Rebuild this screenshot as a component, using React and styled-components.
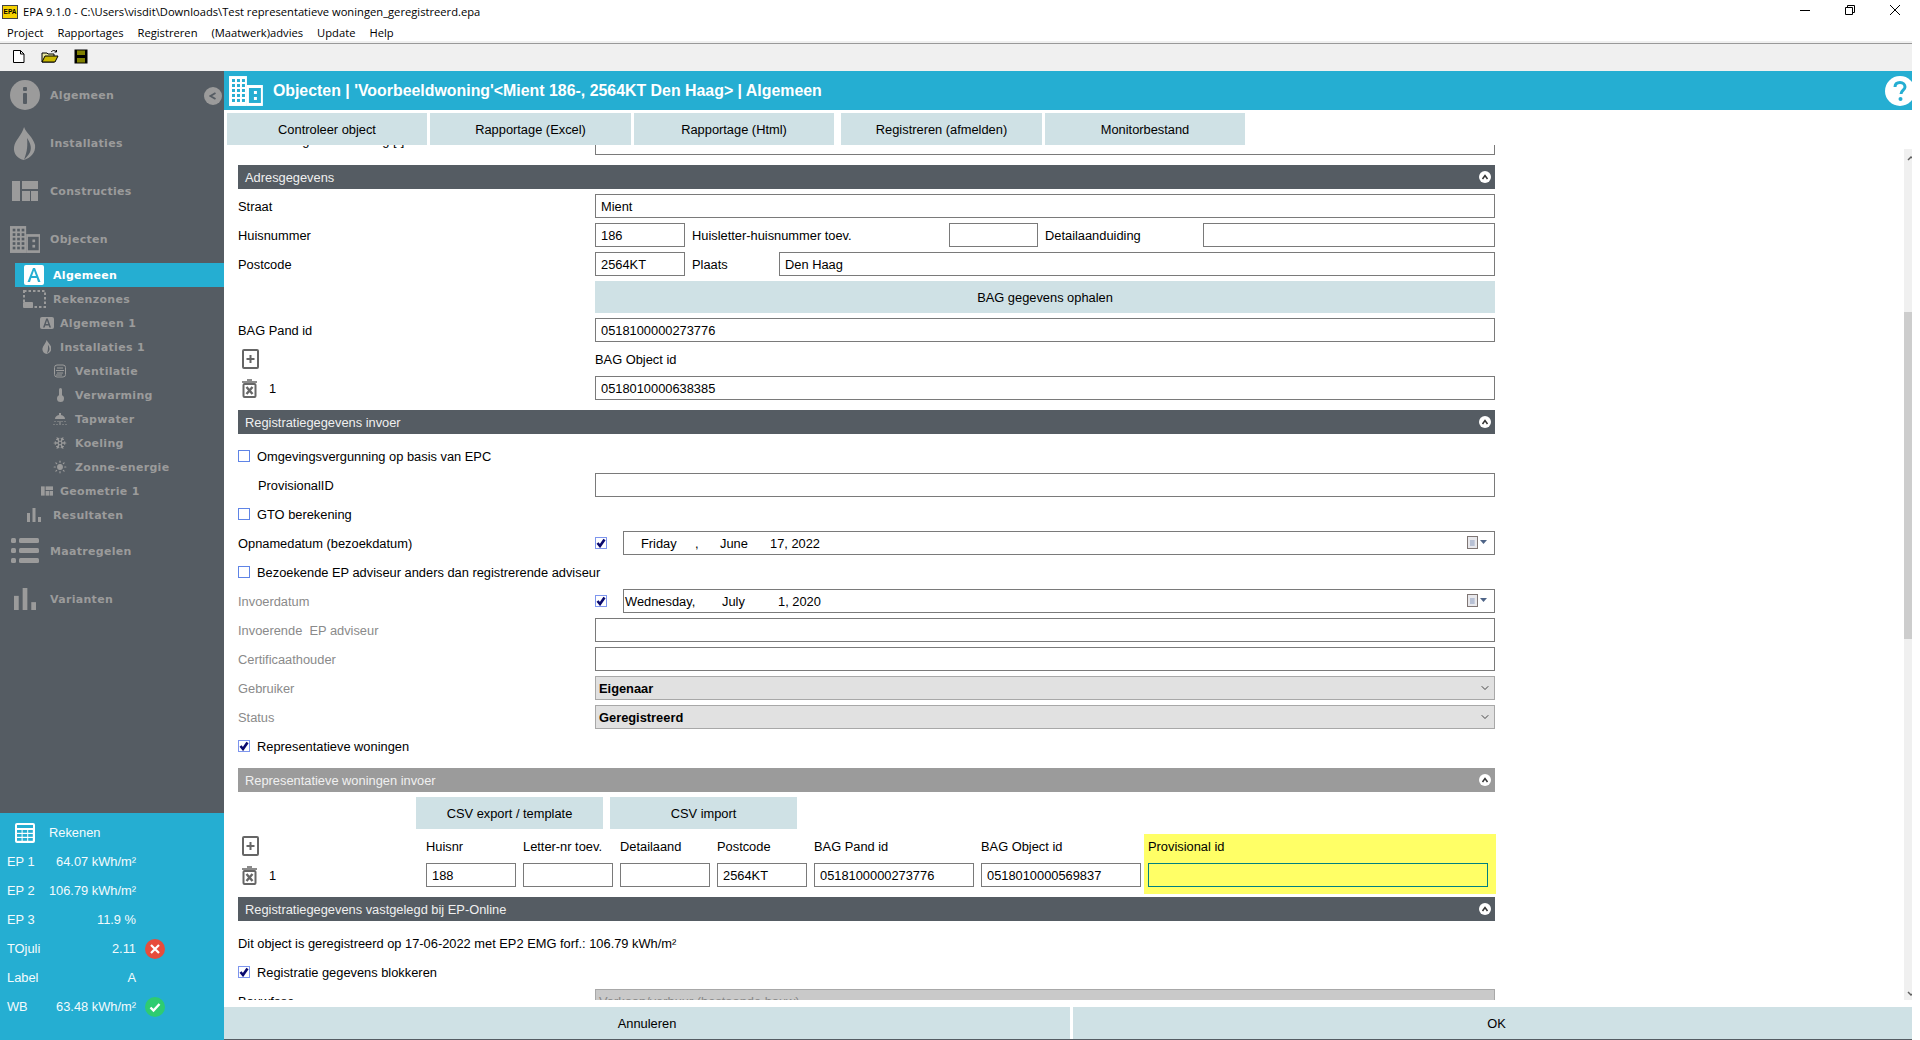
import React from 'react';
import styled, { createGlobalStyle } from 'styled-components';
import { Snowflake, Sun, ChevronDown } from 'lucide-react';

const GlobalStyle = createGlobalStyle`
    html, body {
        margin: 0;
        padding: 0;
        background: #fff;
    }
    body {
        font-family: "Liberation Sans", Arial, sans-serif;
        font-size: 12.85px;
        color: #000;
    }
    * {
        box-sizing: border-box;
    }
`;

const Window = styled.div`
    width: 1920px;
    height: 1040px;
    padding-right: 8px;
    display: flex;
    flex-direction: column;
    overflow: hidden;
    background: #fff;
`;

const TitleBar = styled.div`
    height: 23px;
    display: flex;
    align-items: center;
    padding-left: 2px;
    font-family: "Open Sans", sans-serif;
    font-size: 11.2px;
`;

const AppIcon = styled.span`
    width: 16px;
    height: 14px;
    margin-right: 5px;
    background: #f6d200;
    border: 1px solid #444;
    font-family: "Liberation Sans", sans-serif;
    font-weight: bold;
    font-size: 6.5px;
    line-height: 12px;
    text-align: center;
`;

const WindowButtons = styled.div`
    margin-left: auto;
    display: flex;
    gap: 35px;
    padding: 0 12px 3px 0;
    align-items: center;
`;

const MenuBar = styled.div`
    height: 18px;
    display: flex;
    gap: 14px;
    padding-left: 7px;
    align-items: center;
    font-family: "Open Sans", sans-serif;
    font-size: 11.2px;
`;

const MenuRule = styled.div`
    height: 3px;
    background: #f0f0f0;
    border-bottom: 1px solid #999;
`;

const ToolBar = styled.div`
    height: 27px;
    display: flex;
    align-items: center;
    gap: 14px;
    padding: 0 0 3px 11px;
    background: #f0f0f0;
`;

const Body = styled.div`
    flex: 1;
    display: flex;
    min-height: 0;
`;

const SideBar = styled.aside`
    width: 224px;
    display: flex;
    flex-direction: column;
    flex-shrink: 0;
`;

const Nav = styled.nav`
    flex: 1;
    background: #555c63;
    color: #9b9b9b;
    font-family: "DejaVu Sans", sans-serif;
    font-weight: bold;
    font-size: 11px;
    letter-spacing: 0.3px;
`;

const NavItem = styled.div`
    display: flex;
    align-items: center;
    height: ${(p) => (p.$main ? 48 : 24)}px;
    padding-left: ${(p) => p.$indent || 0}px;
    margin-left: ${(p) => (p.$active ? 15 : 0)}px;
    background: ${(p) => (p.$active ? '#25aed2' : 'transparent')};
    color: ${(p) => (p.$active ? '#fff' : 'inherit')};
`;

const NavIcon = styled.span`
    width: ${(p) => p.$width}px;
    flex-shrink: 0;
    display: flex;
    justify-content: ${(p) => (p.$left ? 'flex-start' : 'center')};
    align-items: center;
`;

const CollapseButton = styled.span`
    width: 18px;
    height: 18px;
    margin: 2px 2px 0 auto;
    border-radius: 50%;
    background: #9b9b9b;
    display: flex;
    align-items: center;
    justify-content: center;
`;

const ResultPanel = styled.div`
    height: 227px;
    padding: 5px 0 0 7px;
    background: #25aed2;
    color: #f4fbfd;
`;

const ResultHead = styled.div`
    height: 29px;
    display: flex;
    align-items: center;
    gap: 14px;
    padding-left: 8px;
`;

const ResultRow = styled.div`
    height: 29px;
    display: grid;
    grid-template-columns: 40px 89px 29px;
    align-items: center;
`;

const ResultValue = styled.span`
    text-align: right;
    white-space: nowrap;
`;

const StatusDot = styled.span`
    justify-self: end;
    width: 20px;
    height: 20px;
    border-radius: 50%;
    background: ${(p) => p.$color};
    display: flex;
    align-items: center;
    justify-content: center;
`;

const Main = styled.main`
    flex: 1;
    min-width: 0;
    display: flex;
    flex-direction: column;
`;

const Header = styled.header`
    height: 39px;
    display: flex;
    align-items: center;
    padding-left: 5px;
    gap: 10px;
    background: #25aed2;
    color: #fff;
    font-weight: bold;
    font-size: 15.9px;
    overflow: hidden;
`;

const HelpIcon = styled.span`
    margin-left: auto;
    margin-right: -3px;
    display: flex;
`;

const ActionBar = styled.div`
    height: 35px;
    padding: 3px 0 0 3px;
    display: flex;
    position: relative;
    z-index: 1;
    background: #fff;
`;

const FlatButton = styled.button`
    border: 0;
    padding: 0 0 0 ${(p) => p.$pad || 0}px;
    height: 32px;
    width: ${(p) => p.$width || 'auto'};
    flex: ${(p) => p.$grow || 'none'};
    margin-right: ${(p) => p.$gap || 0}px;
    background: #cfe1e5;
    color: #000;
    font: inherit;
    font-size: 12.85px;
`;

const Viewport = styled.div`
    flex: 1;
    min-height: 0;
    display: flex;
    overflow: hidden;
`;

const Form = styled.div`
    width: 1271px;
    margin-top: -14px;
    padding-left: 14px;
    display: flex;
    flex-direction: column;
    gap: 5px;
`;

const SectionHeader = styled.div`
    height: 24px;
    margin-top: 5px;
    margin-bottom: ${(p) => (p.$loose ? 5 : 0)}px;
    padding: 0 4px 0 7px;
    flex-shrink: 0;
    display: flex;
    align-items: center;
    justify-content: space-between;
    background: ${(p) => (p.$muted ? '#9b9b9b' : '#555c63')};
    color: #f0f0f0;
`;

const Row = styled.div`
    height: ${(p) => p.$height || 24}px;
    flex-shrink: 0;
    display: grid;
    grid-template-columns: 357px 1fr;
    align-items: center;
`;

const Line = styled.div`
    height: 24px;
    flex-shrink: 0;
    display: flex;
    align-items: center;
`;

const Label = styled.span`
    white-space: nowrap;
    color: ${(p) => (p.$dim ? '#8a8a8a' : '#000')};
    padding-left: ${(p) => p.$indent || 0}px;
`;

const ClippedLabel = styled(Label)`
    align-self: start;
    padding-top: 3px;
    line-height: 14px;
`;

const FieldGroup = styled.div`
    display: flex;
    align-items: center;
`;

const Input = styled.input`
    height: 24px;
    width: ${(p) => p.$width || '100%'};
    flex: ${(p) => (p.$grow ? 1 : 'none')};
    min-width: 0;
    padding: 0 5px;
    border: 1px solid ${(p) => (p.$focus ? '#00807f' : '#7a7a7a')};
    border-radius: 0;
    outline: 0;
    background: ${(p) => (p.$focus ? '#ffff66' : '#fff')};
    font: inherit;
    font-size: 12.85px;
    color: #000;
`;

const InlineLabel = styled.span`
    width: ${(p) => p.$width}px;
    padding-left: 7px;
    white-space: nowrap;
    flex-shrink: 0;
`;

const Select = styled.div`
    height: 24px;
    padding: 0 3px;
    display: flex;
    align-items: center;
    justify-content: space-between;
    border: 1px solid #a8a8a8;
    background: ${(p) => (p.$disabled ? '#c9c9c9' : '#e1e1e1')};
    color: ${(p) => (p.$disabled ? '#888' : '#000')};
    font-weight: ${(p) => (p.$disabled ? 'normal' : 'bold')};
`;

const DateField = styled.div`
    flex: 1;
    height: 24px;
    margin-left: 16px;
    padding-left: ${(p) => p.$pad}px;
    padding-right: 6px;
    display: flex;
    align-items: center;
    border: 1px solid #7a7a7a;
`;

const DatePart = styled.span`
    width: ${(p) => p.$width}px;
    flex-shrink: 0;
    white-space: nowrap;
`;

const CalendarIcon = styled.span`
    margin-left: auto;
    display: flex;
`;

const Box = styled.span`
    width: 12px;
    height: 12px;
    flex-shrink: 0;
    display: flex;
    align-items: center;
    justify-content: center;
    background: #fff;
    border: 1px solid ${(p) => (p.$checked ? '#7d95ee' : '#5f84e6')};
`;

const CheckLine = styled(Line)`
    gap: 7px;
`;

const IconLine = styled(Line)`
    padding-left: 4px;
    gap: 12px;
`;

const ButtonLine = styled.div`
    height: 32px;
    flex-shrink: 0;
    padding-left: 178px;
    display: flex;
    gap: 7px;
`;

const RepGrid = styled.div`
    margin-right: 7px;
    flex-shrink: 0;
    display: grid;
    grid-template-columns: 181px 90px 90px 90px 90px 160px 160px 1fr;
    column-gap: 7px;
`;

const RepColumn = styled.div`
    display: flex;
    flex-direction: column;
    gap: 5px;
`;

const YellowColumn = styled(RepColumn)`
    margin: 0 -8px -7px -4px;
    padding: 0 8px 7px 4px;
    background: #ffff66;
`;

const CollapseDot = styled.span`
    width: 12px;
    height: 12px;
    border-radius: 50%;
    background: #fff;
    display: flex;
    align-items: center;
    justify-content: center;
`;

const ScrollTrack = styled.div`
    width: 8px;
    margin: 4px 0 0 auto;
    padding-top: 6px;
    background: #f0f0f0;
    display: flex;
    flex-direction: column;
`;

const ScrollThumb = styled.div`
    width: 8px;
    height: 327px;
    margin-top: 151px;
    background: #cdcdcd;
`;

const ScrollArrow = styled.span`
    display: flex;
    margin-top: ${(p) => (p.$down ? 'auto' : 0)};
    padding-bottom: ${(p) => (p.$down ? '3px' : 0)};
`;

const Footer = styled.div`
    height: 33px;
    margin-top: 7px;
    display: flex;
    gap: 3px;
    border-bottom: 1px solid #555c63;
`;

// drawings ------------------------------------------------------------------

const Building = ({ size = 27, color = '#9b9b9b', hole = '#555c63' }) => (
    <svg width={size * 1.13} height={size} viewBox="0 0 34 30">
        <rect x="0" y="0" width="18" height="30" fill={color} />
        <rect x="18" y="9" width="16" height="21" fill={color} />
        {[3, 8, 13].map((x) =>
            [3, 8, 13, 18, 23].map((y) => <rect key={`${x}-${y}`} x={x} y={y} width="3" height="3" fill={hole} />),
        )}
        <rect x="20" y="12" width="12" height="15" fill={hole} />
        <rect x="25" y="15" width="3" height="3" fill={color} />
        <rect x="25" y="21" width="3" height="3" fill={color} />
    </svg>
);

const Info = () => (
    <svg width="30" height="30" viewBox="0 0 30 30">
        <circle cx="15" cy="15" r="15" fill="#9b9b9b" />
        <rect x="13" y="7" width="4" height="4" rx="1" fill="#555c63" />
        <rect x="13" y="13" width="4" height="11" rx="1" fill="#555c63" />
    </svg>
);

const Flame = ({ size = 33, color = '#9b9b9b' }) => (
    <svg width={size * 0.7} height={size} viewBox="0 0 23 33">
        <path d="M11 0C13 6 20 10 22 18C23 26 17 31 11 33C5 32 0 27 1 20C2 13 9 8 11 0Z" fill={color} />
        <path d="M14 11C17 16 19 20 17 25C16 28 13 30 11 33C13 27 15 22 14 11Z" fill="#555c63" />
    </svg>
);

const Blocks = ({ width = 26, height = 20 }) => (
    <svg width={width} height={height} viewBox="0 0 26 20">
        <rect x="0" y="0" width="8" height="20" fill="#9b9b9b" />
        <rect x="10" y="0" width="16" height="8" fill="#9b9b9b" />
        <rect x="10" y="10" width="8" height="10" fill="#9b9b9b" />
        <rect x="19" y="10" width="7" height="10" fill="#9b9b9b" />
    </svg>
);

const Bars = ({ width = 14, height = 14 }) => (
    <svg width={width} height={height} viewBox="0 0 14 14">
        <rect x="0" y="5" width="3" height="9" fill="#9b9b9b" />
        <rect x="5.5" y="0" width="3" height="14" fill="#9b9b9b" />
        <rect x="11" y="9" width="3" height="5" fill="#9b9b9b" />
    </svg>
);

const ListIcon = () => (
    <svg width="28" height="26" viewBox="0 0 28 26">
        {[0, 10, 20].map((y) => (
            <g key={y} fill="#9b9b9b">
                <rect x="0" y={y} width="5" height="5" rx="1.5" />
                <rect x="8" y={y} width="20" height="5" rx="1.5" />
            </g>
        ))}
    </svg>
);

const ActiveA = () => (
    <svg width="20" height="20" viewBox="0 0 20 20">
        <rect width="20" height="20" rx="2" fill="#fff" />
        <path d="M3.5 17L9 3H11L16.5 17H14L12.7 13H7.3L6 17ZM8 11H12L10 5.5Z" fill="#25aed2" />
    </svg>
);

const SmallA = () => (
    <svg width="14" height="12" viewBox="0 0 14 12">
        <rect width="14" height="12" rx="2" fill="#9b9b9b" />
        <path d="M3 10.5L6.2 1.5H7.8L11 10.5H9.4L8.7 8.5H5.3L4.6 10.5ZM5.8 7H8.2L7 3.6Z" fill="#555c63" />
    </svg>
);

const Zones = () => (
    <svg width="23" height="19" viewBox="0 0 23 19">
        <rect x="1" y="1" width="21" height="16" fill="none" stroke="#9b9b9b" strokeWidth="2" strokeDasharray="2.5 2" />
        <rect x="0" y="12" width="10" height="6" rx="1" fill="#9b9b9b" />
    </svg>
);

const Vent = () => (
    <svg width="14" height="14" viewBox="0 0 14 14">
        <rect x="1.5" y="1" width="11" height="12" rx="2.5" fill="none" stroke="#9b9b9b" />
        <path d="M4 4H10M3 6.5H11M4 9H10M3 11H9" stroke="#9b9b9b" />
    </svg>
);

const Thermo = () => (
    <svg width="9" height="14" viewBox="0 0 9 14">
        <rect x="3" y="0" width="3" height="9" rx="1.5" fill="#9b9b9b" />
        <circle cx="4.5" cy="10.5" r="3.5" fill="#9b9b9b" />
    </svg>
);

const Shower = () => (
    <svg width="14" height="13" viewBox="0 0 14 13">
        <path d="M6 0H8V2C10.5 2.5 12 4 12 6H2C2 4 3.5 2.5 6 2Z" fill="#9b9b9b" />
        <path d="M2 8V9M5 8V9M9 8V9M12 8V9M1 11V12M4 11V12M7 8V12M10 11V12M13 11V12" stroke="#9b9b9b" />
    </svg>
);

const Calculator = () => (
    <svg width="20" height="20" viewBox="0 0 20 20">
        <rect width="20" height="20" rx="2" fill="#fff" />
        <rect x="2" y="2" width="16" height="3" fill="#25aed2" />
        {[2, 7.6, 13.2].map((x) =>
            [7, 11, 15].map((y) => <rect key={`${x}-${y}`} x={x} y={y} width="4.6" height="2.8" fill="#25aed2" />),
        )}
    </svg>
);

const PlusBox = () => (
    <svg width="17" height="20" viewBox="0 0 17 20">
        <rect x="1" y="1" width="15" height="18" rx="1" fill="#fff" stroke="#666" strokeWidth="2" />
        <path d="M4.5 10H12.5M8.5 6V14" stroke="#666" strokeWidth="2" />
    </svg>
);

const Trash = () => (
    <svg width="15" height="19" viewBox="0 0 15 19">
        <path d="M0 3H15M5 1H10" stroke="#666" strokeWidth="1.6" />
        <rect x="1.5" y="5" width="12" height="13" rx="1" fill="#fff" stroke="#666" strokeWidth="2" />
        <path d="M4.5 8L10.5 15M10.5 8L4.5 15" stroke="#666" strokeWidth="2.4" />
    </svg>
);

const Tick = () => (
    <svg width="10" height="10" viewBox="0 0 10 10">
        <path d="M1.5 5L4 8L8.5 1.5" fill="none" stroke="#0a0a6e" strokeWidth="2.6" />
    </svg>
);

const Calendar = () => (
    <svg width="21" height="14" viewBox="0 0 21 14">
        <rect x="0.5" y="0.5" width="10" height="12" fill="#e8e8ec" stroke="#7f7674" />
        <path d="M3 5H8M3 7H8M3 9H8M4 4V10M6 4V10" stroke="#a7b3cc" />
        <path d="M13 4H20L16.5 8Z" fill="#4e6487" />
    </svg>
);

const Check = ({ checked }) => <Box $checked={checked}>{checked && <Tick />}</Box>;

const Chevron = () => (
    <CollapseDot>
        <svg width="8" height="8" viewBox="0 0 8 8">
            <path d="M1.5 6L4 2.5L6.5 6" fill="none" stroke="#333" strokeWidth="1.5" />
        </svg>
    </CollapseDot>
);

const Section = ({ title, muted, loose }) => (
    <SectionHeader $muted={muted} $loose={loose}>
        {title}
        <Chevron />
    </SectionHeader>
);

const navItems = [
    { label: 'Rekenzones', indent: 23, width: 30, left: true, icon: <Zones /> },
    { label: 'Algemeen 1', indent: 33, width: 27, icon: <SmallA /> },
    { label: 'Installaties 1', indent: 33, width: 27, icon: <Flame size={14} /> },
    { label: 'Ventilatie', indent: 45, width: 30, icon: <Vent /> },
    { label: 'Verwarming', indent: 45, width: 30, icon: <Thermo /> },
    { label: 'Tapwater', indent: 45, width: 30, icon: <Shower /> },
    { label: 'Koeling', indent: 45, width: 30, icon: <Snowflake size={14} color="#9b9b9b" /> },
    { label: 'Zonne-energie', indent: 45, width: 30, icon: <Sun size={14} color="#9b9b9b" fill="#9b9b9b" /> },
    { label: 'Geometrie 1', indent: 33, width: 27, icon: <Blocks width={12} height={10} /> },
    { label: 'Resultaten', indent: 27, width: 26, left: true, icon: <Bars /> },
];

const results = [
    { label: 'EP 1', value: '64.07 kWh/m²' },
    { label: 'EP 2', value: '106.79 kWh/m²' },
    { label: 'EP 3', value: '11.9 %' },
    { label: 'TOjuli', value: '2.11', status: 'bad' },
    { label: 'Label', value: 'A' },
    { label: 'WB', value: '63.48 kWh/m²', status: 'good' },
];

const repColumns = [
    { label: 'Huisnr', value: '188' },
    { label: 'Letter-nr toev.', value: '' },
    { label: 'Detailaand', value: '' },
    { label: 'Postcode', value: '2564KT' },
    { label: 'BAG Pand id', value: '0518100000273776' },
    { label: 'BAG Object id', value: '0518010000569837' },
];

const ro = { readOnly: true };

const App = () => (
    <Window>
        <GlobalStyle />
        <TitleBar>
            <AppIcon>EPA</AppIcon>
            EPA 9.1.0 - C:\Users\visdit\Downloads\Test representatieve woningen_geregistreerd.epa
            <WindowButtons>
                <svg width="10" height="10" viewBox="0 0 10 10">
                    <path d="M0 5.5H10" stroke="#000" />
                </svg>
                <svg width="10" height="10" viewBox="0 0 10 10">
                    <path d="M0.5 2.5H7.5V9.5H0.5ZM2.5 2.5V0.5H9.5V7.5H7.5" fill="none" stroke="#000" />
                </svg>
                <svg width="10" height="10" viewBox="0 0 10 10">
                    <path d="M0 0L10 10M10 0L0 10" stroke="#000" />
                </svg>
            </WindowButtons>
        </TitleBar>
        <MenuBar>
            <span>Project</span>
            <span>Rapportages</span>
            <span>Registreren</span>
            <span>(Maatwerk)advies</span>
            <span>Update</span>
            <span>Help</span>
        </MenuBar>
        <MenuRule />
        <ToolBar>
            <svg width="16" height="15" viewBox="0 0 16 15">
                <path d="M2.5 1.5H9.5L13 5V13.5H2.5Z" fill="#fff" stroke="#000" />
                <path d="M9.5 1.5V5H13" fill="none" stroke="#000" />
            </svg>
            <svg width="18" height="15" viewBox="0 0 18 15">
                <path d="M1 13V4H6L7 5H13V13Z" fill="#e8e8a0" stroke="#000" />
                <path d="M1 13L4 7H17L14 13Z" fill="#c9b800" stroke="#000" />
                <path d="M10 3C12 1 14 1 15.5 3M15.5 3V1M15.5 3H13.5" fill="none" stroke="#000" />
            </svg>
            <svg width="16" height="15" viewBox="0 0 16 15">
                <rect x="1.5" y="0.5" width="13" height="14" fill="#000" />
                <rect x="4" y="1.5" width="8" height="4.5" fill="#808000" />
                <rect x="4" y="9" width="8" height="4.5" fill="#808000" />
            </svg>
        </ToolBar>
        <Body>
            <SideBar>
                <Nav>
                    <NavItem $main>
                        <NavIcon $width={50}>
                            <Info />
                        </NavIcon>
                        Algemeen
                        <CollapseButton>
                            <svg width="8" height="8" viewBox="0 0 8 8">
                                <path d="M6.5 1L1.5 4L6.5 7" fill="none" stroke="#555c63" strokeWidth="1.8" />
                            </svg>
                        </CollapseButton>
                    </NavItem>
                    <NavItem $main>
                        <NavIcon $width={50}>
                            <Flame />
                        </NavIcon>
                        Installaties
                    </NavItem>
                    <NavItem $main>
                        <NavIcon $width={50}>
                            <Blocks />
                        </NavIcon>
                        Constructies
                    </NavItem>
                    <NavItem $main>
                        <NavIcon $width={50}>
                            <Building />
                        </NavIcon>
                        Objecten
                    </NavItem>
                    <NavItem $active $indent={9}>
                        <NavIcon $width={29} $left>
                            <ActiveA />
                        </NavIcon>
                        Algemeen
                    </NavItem>
                    {navItems.map((item) => (
                        <NavItem key={item.label} $indent={item.indent}>
                            <NavIcon $width={item.width} $left={item.left}>
                                {item.icon}
                            </NavIcon>
                            {item.label}
                        </NavItem>
                    ))}
                    <NavItem $main>
                        <NavIcon $width={50}>
                            <ListIcon />
                        </NavIcon>
                        Maatregelen
                    </NavItem>
                    <NavItem $main>
                        <NavIcon $width={50}>
                            <Bars width={22} height={22} />
                        </NavIcon>
                        Varianten
                    </NavItem>
                </Nav>
                <ResultPanel>
                    <ResultHead>
                        <Calculator />
                        Rekenen
                    </ResultHead>
                    {results.map((r) => (
                        <ResultRow key={r.label}>
                            <span>{r.label}</span>
                            <ResultValue>{r.value}</ResultValue>
                            {r.status === 'bad' && (
                                <StatusDot $color="#e74c3c">
                                    <svg width="12" height="12" viewBox="0 0 12 12">
                                        <path d="M2 2L10 10M10 2L2 10" stroke="#fff" strokeWidth="2.2" />
                                    </svg>
                                </StatusDot>
                            )}
                            {r.status === 'good' && (
                                <StatusDot $color="#2ecc71">
                                    <svg width="12" height="12" viewBox="0 0 12 12">
                                        <path d="M1.5 6.5L4.5 9.5L10.5 3" fill="none" stroke="#fff" strokeWidth="2.4" />
                                    </svg>
                                </StatusDot>
                            )}
                        </ResultRow>
                    ))}
                </ResultPanel>
            </SideBar>
            <Main>
                <Header>
                    <Building size={30} color="#fff" hole="#25aed2" />
                    Objecten | 'Voorbeeldwoning'&lt;Mient 186-, 2564KT Den Haag&gt; | Algemeen
                    <HelpIcon>
                        <svg width="30" height="30" viewBox="0 0 30 30">
                            <circle cx="15" cy="15" r="15" fill="#fff" />
                            <path d="M10 11C10 8 12 6.5 15 6.5C18 6.5 20 8.5 20 11C20 14 16 14.5 16 18" fill="none" stroke="#25aed2" strokeWidth="3" />
                            <circle cx="15.5" cy="23" r="2" fill="#25aed2" />
                        </svg>
                    </HelpIcon>
                </Header>
                <ActionBar>
                    <FlatButton $width="200px" $gap={3}>Controleer object</FlatButton>
                    <FlatButton $width="201px" $gap={3}>Rapportage (Excel)</FlatButton>
                    <FlatButton $width="200px" $gap={7}>Rapportage (Html)</FlatButton>
                    <FlatButton $width="201px" $gap={3}>Registreren (afmelden)</FlatButton>
                    <FlatButton $width="200px">Monitorbestand</FlatButton>
                </ActionBar>
                <Viewport>
                    <Form>
                        <Row>
                            <ClippedLabel>Bestemming woonvorming [-]</ClippedLabel>
                            <Input {...ro} />
                        </Row>
                        <Section title="Adresgegevens" />
                        <Row>
                            <Label>Straat</Label>
                            <Input {...ro} value="Mient" />
                        </Row>
                        <Row>
                            <Label>Huisnummer</Label>
                            <FieldGroup>
                                <Input {...ro} value="186" $width="90px" />
                                <InlineLabel $width={264}>Huisletter-huisnummer toev.</InlineLabel>
                                <Input {...ro} $width="89px" />
                                <InlineLabel $width={165}>Detailaanduiding</InlineLabel>
                                <Input {...ro} $grow />
                            </FieldGroup>
                        </Row>
                        <Row>
                            <Label>Postcode</Label>
                            <FieldGroup>
                                <Input {...ro} value="2564KT" $width="90px" />
                                <InlineLabel $width={94}>Plaats</InlineLabel>
                                <Input {...ro} value="Den Haag" $grow />
                            </FieldGroup>
                        </Row>
                        <Row $height={32}>
                            <span />
                            <FlatButton>BAG gegevens ophalen</FlatButton>
                        </Row>
                        <Row>
                            <Label>BAG Pand id</Label>
                            <Input {...ro} value="0518100000273776" />
                        </Row>
                        <Row>
                            <IconLine>
                                <PlusBox />
                            </IconLine>
                            <Label>BAG Object id</Label>
                        </Row>
                        <Row>
                            <IconLine>
                                <Trash />1
                            </IconLine>
                            <Input {...ro} value="0518010000638385" />
                        </Row>
                        <Section title="Registratiegegevens invoer" loose />
                        <CheckLine>
                            <Check />
                            Omgevingsvergunning op basis van EPC
                        </CheckLine>
                        <Row>
                            <Label $indent={20}>ProvisionalID</Label>
                            <Input {...ro} />
                        </Row>
                        <CheckLine>
                            <Check />
                            GTO berekening
                        </CheckLine>
                        <Row>
                            <Label>Opnamedatum (bezoekdatum)</Label>
                            <FieldGroup>
                                <Check checked />
                                <DateField $pad={17}>
                                    <DatePart $width={54}>Friday</DatePart>
                                    <DatePart $width={25}>,</DatePart>
                                    <DatePart $width={50}>June</DatePart>
                                    <DatePart $width={60}>17, 2022</DatePart>
                                    <CalendarIcon>
                                        <Calendar />
                                    </CalendarIcon>
                                </DateField>
                            </FieldGroup>
                        </Row>
                        <CheckLine>
                            <Check />
                            Bezoekende EP adviseur anders dan registrerende adviseur
                        </CheckLine>
                        <Row>
                            <Label $dim>Invoerdatum</Label>
                            <FieldGroup>
                                <Check checked />
                                <DateField $pad={1}>
                                    <DatePart $width={97}>Wednesday,</DatePart>
                                    <DatePart $width={56}>July</DatePart>
                                    <DatePart $width={60}>1, 2020</DatePart>
                                    <CalendarIcon>
                                        <Calendar />
                                    </CalendarIcon>
                                </DateField>
                            </FieldGroup>
                        </Row>
                        <Row>
                            <Label $dim>Invoerende&nbsp; EP adviseur</Label>
                            <Input {...ro} />
                        </Row>
                        <Row>
                            <Label $dim>Certificaathouder</Label>
                            <Input {...ro} />
                        </Row>
                        <Row>
                            <Label $dim>Gebruiker</Label>
                            <Select>
                                Eigenaar
                                <ChevronDown size={12} color="#333" strokeWidth={1.8} />
                            </Select>
                        </Row>
                        <Row>
                            <Label $dim>Status</Label>
                            <Select>
                                Geregistreerd
                                <ChevronDown size={12} color="#333" strokeWidth={1.8} />
                            </Select>
                        </Row>
                        <CheckLine>
                            <Check checked />
                            Representatieve woningen
                        </CheckLine>
                        <Section title="Representatieve woningen invoer" muted />
                        <ButtonLine>
                            <FlatButton $width="187px">CSV export / template</FlatButton>
                            <FlatButton $width="187px">CSV import</FlatButton>
                        </ButtonLine>
                        <RepGrid>
                            <RepColumn>
                                <IconLine>
                                    <PlusBox />
                                </IconLine>
                                <IconLine>
                                    <Trash />1
                                </IconLine>
                            </RepColumn>
                            {repColumns.map((col) => (
                                <RepColumn key={col.label}>
                                    <Line>{col.label}</Line>
                                    <Input {...ro} value={col.value} />
                                </RepColumn>
                            ))}
                            <YellowColumn>
                                <Line>Provisional id</Line>
                                <Input {...ro} $focus />
                            </YellowColumn>
                        </RepGrid>
                        <Section title="Registratiegegevens vastgelegd bij EP-Online" loose />
                        <Line>Dit object is geregistreerd op 17-06-2022 met EP2 EMG forf.: 106.79 kWh/m²</Line>
                        <CheckLine>
                            <Check checked />
                            Registratie gegevens blokkeren
                        </CheckLine>
                        <Row>
                            <Label>Bouwfase</Label>
                            <Select $disabled>Verkoop/verhuur (bestaande bouw)</Select>
                        </Row>
                    </Form>
                    <ScrollTrack>
                        <ScrollArrow>
                            <svg width="8" height="6" viewBox="0 0 8 6">
                                <path d="M4 5L7 2L8 3" fill="none" stroke="#606060" strokeWidth="1.5" />
                            </svg>
                        </ScrollArrow>
                        <ScrollThumb />
                        <ScrollArrow $down>
                            <svg width="8" height="6" viewBox="0 0 8 6">
                                <path d="M4 1L7 4L8 3" fill="none" stroke="#606060" strokeWidth="1.5" />
                            </svg>
                        </ScrollArrow>
                    </ScrollTrack>
                </Viewport>
                <Footer>
                    <FlatButton $width="846px">Annuleren</FlatButton>
                    <FlatButton $grow="1" $pad={8}>OK</FlatButton>
                </Footer>
            </Main>
        </Body>
    </Window>
);

export default App;
